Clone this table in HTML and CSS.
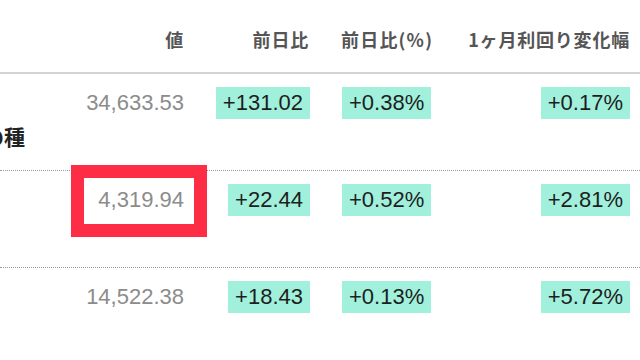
FILE: index.html
```html
<!DOCTYPE html>
<html lang="ja">
<head>
<meta charset="utf-8">
<link rel="stylesheet" href="styles.css">
</head>
<body>
<div class="table">
  <div class="row head">
    <div class="cell"></div>
    <div class="cell">値</div>
    <div class="cell">前日比</div>
    <div class="cell">前日比(%)</div>
    <div class="cell">1ヶ月利回り変化幅</div>
  </div>
  <div class="row">
    <div class="cell label"><span class="label-text">の種</span></div>
    <div class="cell value">34,633.53</div>
    <div class="cell"><span class="badge">+131.02</span></div>
    <div class="cell left"><span class="badge">+0.38%</span></div>
    <div class="cell"><span class="badge">+0.17%</span></div>
  </div>
  <div class="row">
    <div class="cell label"></div>
    <div class="cell value marked">4,319.94<span class="mark"></span></div>
    <div class="cell"><span class="badge">+22.44</span></div>
    <div class="cell left"><span class="badge">+0.52%</span></div>
    <div class="cell"><span class="badge">+2.81%</span></div>
  </div>
  <div class="row last">
    <div class="cell label"></div>
    <div class="cell value">14,522.38</div>
    <div class="cell"><span class="badge">+18.43</span></div>
    <div class="cell left"><span class="badge">+0.13%</span></div>
    <div class="cell"><span class="badge">+5.72%</span></div>
  </div>
</div>
</body>
</html>
```
FILE: styles.css
```css
html, body {
  margin: 0;
  padding: 0;
  background: #ffffff;
  width: 640px;
  height: 360px;
  overflow: hidden;
}
.table {
  width: 640px;
  font-family: "Liberation Sans", "Noto Sans CJK JP", sans-serif;
}
.row {
  display: grid;
  grid-template-columns: 70px 114px 126px 118px 202px 10px;
  height: 96px;
  border-bottom: 1px dotted #9a9a9a;
}
.row.head {
  height: 72px;
  border-bottom: 2px solid #d3d3d3;
}
.row.last {
  border-bottom: none;
}
.cell {
  text-align: right;
  padding-top: 13px;
  font-size: 22px;
  line-height: 32px;
  position: relative;
  white-space: nowrap;
}
.cell.left {
  text-align: left;
  padding-left: 32px;
}
.head .cell {
  font-family: "Noto Sans CJK JP", sans-serif;
  font-weight: 700;
  font-size: 18px;
  line-height: 24px;
  letter-spacing: 0.8px;
  color: #555555;
  padding-top: 27px;
}
.head .cell:nth-child(3) { padding-right: 1px; }
.head .cell:nth-child(4) { text-align: left; padding-left: 31px; letter-spacing: 1.2px; }
.value {
  color: #8c8c8c;
}
.badge {
  display: inline-block;
  background: #a0f0dc;
  color: #1e1e1e;
  padding: 0 7px;
  height: 32px;
}
.label {
  padding-top: 50px;
  text-align: left;
}
.label-text {
  display: block;
  margin-left: -17px;
  font-family: "Noto Sans CJK JP", sans-serif;
  font-weight: 700;
  font-size: 21px;
  line-height: 24px;
  color: #222222;
}
.mark {
  position: absolute;
  left: 1px;
  top: -6px;
  width: 136px;
  height: 72px;
  box-sizing: border-box;
  border: 13px solid #fc2d44;
}
```
